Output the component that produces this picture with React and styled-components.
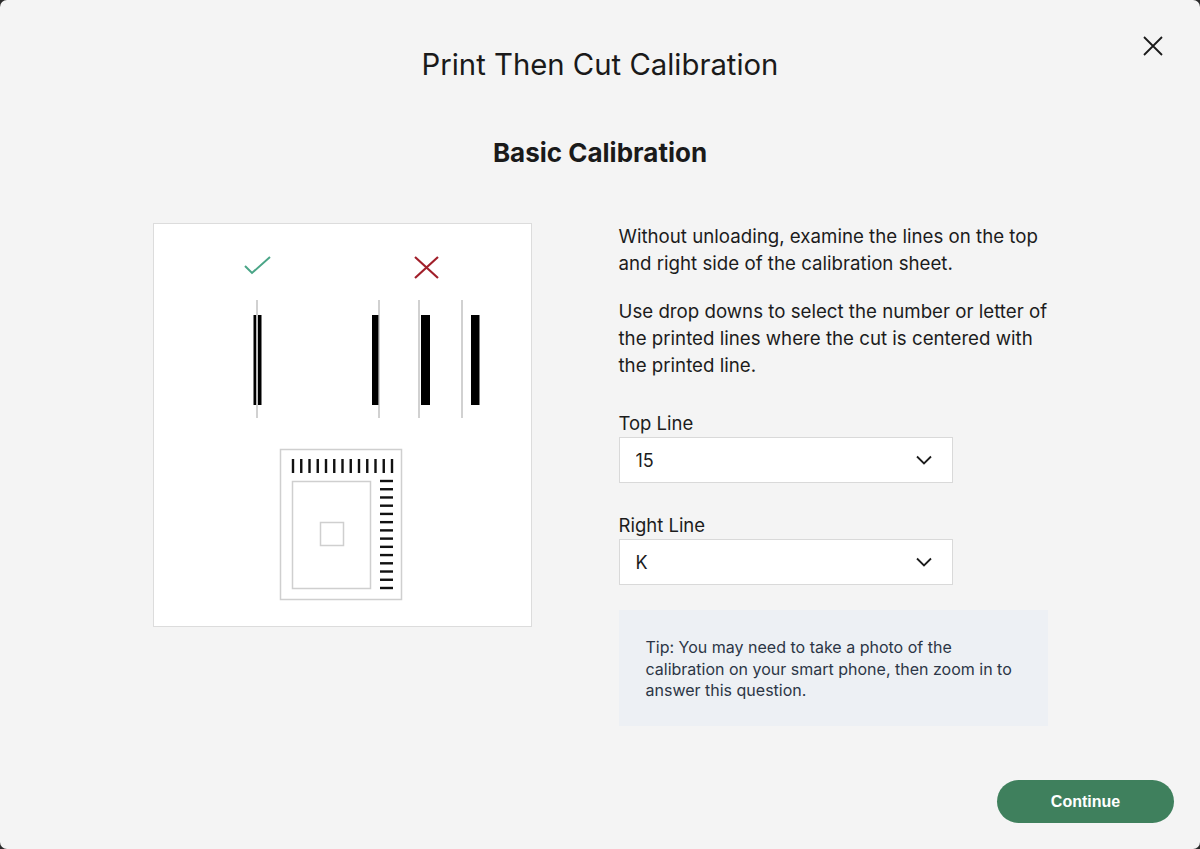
import React, { useState } from "react";
import styled, { createGlobalStyle } from "styled-components";

const GlobalStyle = createGlobalStyle`
  html, body {
    margin: 0;
    padding: 0;
    background: #2b2b2b;
  }
  * {
    box-sizing: border-box;
  }
`;

const Modal = styled.div`
  position: relative;
  width: 1200px;
  height: 849px;
  background: #f4f4f4;
  border-radius: 7px;
  display: flex;
  flex-direction: column;
  font-family: "Inter", "Lato", sans-serif;
  color: #1a1a1a;
`;

const CloseButton = styled.button`
  position: absolute;
  top: 34px;
  right: 35px;
  width: 24px;
  height: 24px;
  padding: 0;
  border: none;
  background: none;
  cursor: pointer;
  display: flex;
  align-items: center;
  justify-content: center;
`;

const Title = styled.h1`
  margin: 47px 0 0;
  font-size: 29.3px;
  font-weight: 400;
  text-align: center;
  line-height: 36px;
`;

const SubTitle = styled.h2`
  margin: 53px 0 0;
  font-size: 26px;
  font-weight: 700;
  text-align: center;
  line-height: 34px;
`;

const Content = styled.div`
  display: flex;
  justify-content: center;
  gap: 87px;
  margin-top: 53px;
`;

const PictureCard = styled.div`
  width: 379px;
  height: 404px;
  background: #ffffff;
  border: 1px solid #dcdcdc;
  display: flex;
`;

const Side = styled.div`
  width: 429px;
  display: flex;
  flex-direction: column;
`;

const Text = styled.p`
  margin: 0 0 21px;
  font-size: 18.7px;
  line-height: 27px;
  color: #1c1c1c;
`;

const Label = styled.label`
  display: block;
  margin-top: ${(props) => props.top}px;
  font-size: 18.5px;
  line-height: 24px;
  color: #1c1c1c;
`;

const SelectBox = styled.div`
  position: relative;
  width: 334px;
  height: 46px;
  margin-top: 2px;
  background: #ffffff;
  border: 1px solid #d9d9d9;
  display: flex;
  align-items: center;
  padding: 0 20px 0 16px;
`;

const Select = styled.select`
  appearance: none;
  border: none;
  background: transparent;
  outline: none;
  flex: 1;
  height: 100%;
  font-family: inherit;
  font-size: 18px;
  color: #1c1c1c;
  cursor: pointer;
`;

const Chevron = styled.svg`
  pointer-events: none;
  flex-shrink: 0;
`;

const Tip = styled.div`
  margin-top: 25px;
  width: 429px;
  height: 116px;
  background: #edf0f4;
  padding: 27px 24px 0 27px;
  font-size: 16px;
  line-height: 21.5px;
  color: #2c3646;
`;

const Footer = styled.div`
  margin-top: auto;
  display: flex;
  justify-content: flex-end;
  padding: 0 26px 26px;
`;

const ContinueButton = styled.button`
  width: 177px;
  height: 43px;
  border: none;
  border-radius: 22px;
  background: #3f805d;
  color: #ffffff;
  font-family: "Liberation Sans", Arial, sans-serif;
  font-weight: 700;
  font-size: 16px;
  cursor: pointer;
`;

const Dropdown = ({ label, top, value, options, onChange }) => (
  <>
    <Label top={top}>{label}</Label>
    <SelectBox>
      <Select value={value} onChange={(e) => onChange(e.target.value)}>
        {options.map((o) => (
          <option key={o}>{o}</option>
        ))}
      </Select>
      <Chevron width="16" height="10" viewBox="0 0 16 10">
        <path d="M1 1.5 L8 8.5 L15 1.5" fill="none" stroke="#1c1c1c" strokeWidth="1.8" />
      </Chevron>
    </SelectBox>
  </>
);

// calibration drawing: good cut vs. off-centre cuts, and the test sheet
const CalibrationArt = () => {
  const topTicks = Array.from({ length: 13 }, (_, i) => 139 + i * 8.25);
  const sideTicks = Array.from({ length: 14 }, (_, i) => 257 + i * 8.23);
  return (
    <svg width="377" height="402" viewBox="0 0 377 402">
      <polyline points="91,42 98,49 116,33" fill="none" stroke="#4aa587" strokeWidth="2" />
      <path d="M261 33 L284 54 M284 33 L261 54" stroke="#a11f2a" strokeWidth="2.2" />

      <rect x="99.5" y="91" width="8" height="90" fill="#000" />
      <rect x="102.3" y="91" width="1.6" height="90" fill="#fff" />
      <rect x="218" y="91" width="7" height="90" fill="#000" />
      <rect x="267" y="91" width="9" height="90" fill="#000" />
      <rect x="317" y="91" width="8.5" height="90" fill="#000" />
      {[103, 225, 265, 308].map((x) => (
        <line key={x} x1={x} y1="76" x2={x} y2="194" stroke="#b8b8b8" strokeWidth="1.3" />
      ))}

      <rect x="126.5" y="225.5" width="121" height="150" fill="none" stroke="#cfcfcf" strokeWidth="1.5" />
      <rect x="138.5" y="257.5" width="78" height="107" fill="none" stroke="#cfcfcf" strokeWidth="1.5" />
      <rect x="166.5" y="298.5" width="23" height="23" fill="none" stroke="#cfcfcf" strokeWidth="1.5" />
      {topTicks.map((x) => (
        <rect key={x} x={x - 1.2} y="235" width="2.4" height="14" fill="#111" />
      ))}
      {sideTicks.map((y) => (
        <rect key={y} x="226" y={y - 1.2} width="13" height="2.4" fill="#111" />
      ))}
    </svg>
  );
};

export default function App() {
  const [topLine, setTopLine] = useState("15");
  const [rightLine, setRightLine] = useState("K");
  const numbers = Array.from({ length: 30 }, (_, i) => String(i + 1));
  const letters = "ABCDEFGHIJKLMNOPQRSTUVWXYZ".split("");

  return (
    <>
      <GlobalStyle />
      <Modal>
        <CloseButton aria-label="Close">
          <svg width="20" height="20" viewBox="0 0 20 20">
            <path d="M1 1 L19 19 M19 1 L1 19" stroke="#1a1a1a" strokeWidth="1.8" />
          </svg>
        </CloseButton>
        <Title>Print Then Cut Calibration</Title>
        <SubTitle>Basic Calibration</SubTitle>
        <Content>
          <PictureCard>
            <CalibrationArt />
          </PictureCard>
          <Side>
            <Text>
              Without unloading, examine the lines on the top and right side of the calibration sheet.
            </Text>
            <Text>
              Use drop downs to select the number or letter of the printed lines where the cut is
              centered with the printed line.
            </Text>
            <Dropdown label="Top Line" top={11} value={topLine} options={numbers} onChange={setTopLine} />
            <Dropdown label="Right Line" top={30} value={rightLine} options={letters} onChange={setRightLine} />
            <Tip>
              Tip: You may need to take a photo of the calibration on your smart phone, then zoom in to
              answer this question.
            </Tip>
          </Side>
        </Content>
        <Footer>
          <ContinueButton>Continue</ContinueButton>
        </Footer>
      </Modal>
    </>
  );
}
